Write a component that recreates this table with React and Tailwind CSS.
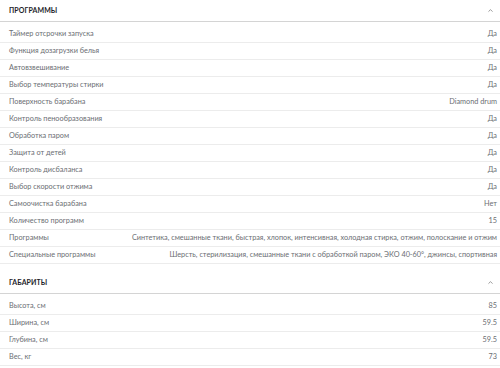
import { ChevronUp } from "lucide-react";

const programs = [
  ["Таймер отсрочки запуска", "Да"],
  ["Функция дозагрузки белья", "Да"],
  ["Автовзвешивание", "Да"],
  ["Выбор температуры стирки", "Да"],
  ["Поверхность барабана", "Diamond drum"],
  ["Контроль пенообразования", "Да"],
  ["Обработка паром", "Да"],
  ["Защита от детей", "Да"],
  ["Контроль дисбаланса", "Да"],
  ["Выбор скорости отжима", "Да"],
  ["Самоочистка барабана", "Нет"],
  ["Количество программ", "15"],
  ["Программы", "Синтетика, смешанные ткани, быстрая, хлопок, интенсивная, холодная стирка, отжим, полоскание и отжим"],
  ["Специальные программы", "Шерсть, стерилизация, смешанные ткани с обработкой паром, ЭКО 40-60°, джинсы, спортивная"],
];

const sizes = [
  ["Высота, см", "85"],
  ["Ширина, см", "59.5"],
  ["Глубина, см", "59.5"],
  ["Вес, кг", "73"],
];

function Section({ title, rows }) {
  return (
    <section>
      <div className="h-[22px] flex items-center justify-between pl-[9px] pr-[6px] border-b border-[#d4d4d4]">
        <h3 className="text-[7px] font-bold text-[#1e1e2a] tracking-[0.1px]">{title}</h3>
        <ChevronUp className="w-[7px] h-[7px] text-[#777]" strokeWidth={2.5} />
      </div>
      <div className="pt-[4px]">
        {rows.map(([label, value]) => (
          <div
            key={label}
            className="h-[17px] flex items-center justify-between pl-[9px] pr-[3px] border-b border-[#ececec]"
          >
            <span className="text-[7.3px] text-[#6b6e73] whitespace-nowrap">{label}</span>
            <span className="text-[7.3px] text-[#6b6e73] whitespace-nowrap text-right">{value}</span>
          </div>
        ))}
      </div>
    </section>
  );
}

export default function App() {
  return (
    <div className="w-[500px] h-[368px] bg-white overflow-hidden font-['Lato',sans-serif]">
      <Section title="ПРОГРАММЫ" rows={programs} />
      <div className="h-[8px]" />
      <Section title="ГАБАРИТЫ" rows={sizes} />
    </div>
  );
}
